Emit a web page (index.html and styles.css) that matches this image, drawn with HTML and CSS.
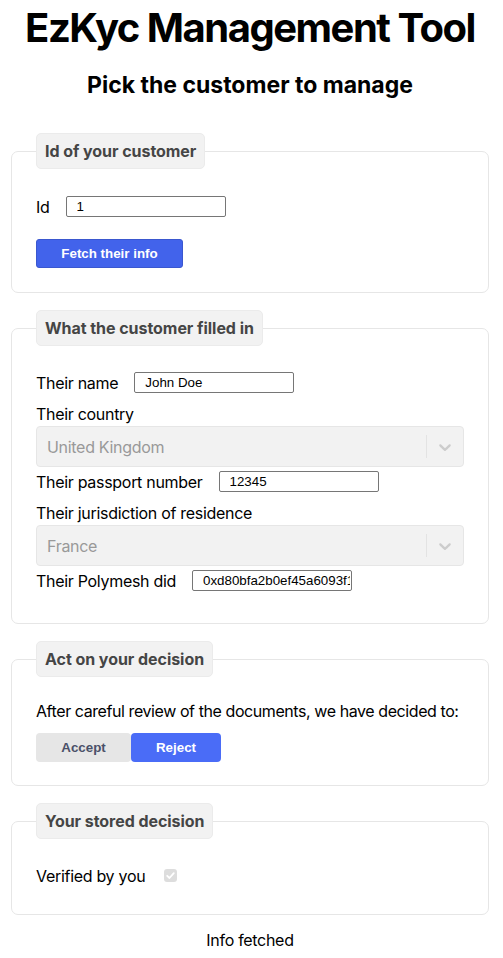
FILE: index.html
```html
<!DOCTYPE html>
<html lang="en">
<head>
<meta charset="utf-8">
<title>EzKyc Management Tool</title>
<link rel="stylesheet" href="styles.css">
</head>
<body>
<div class="app">
  <h1 class="title">EzKyc Management Tool</h1>
  <h2 class="subtitle">Pick the customer to manage</h2>

  <fieldset class="box box-id">
    <legend class="box-legend">Id of your customer</legend>
    <div class="row row-first">
      <label class="row-label" for="cid">Id</label>
      <input class="text-input" id="cid" type="text" value="1">
    </div>
    <button class="btn-primary" type="button">Fetch their info</button>
  </fieldset>

  <fieldset class="box box-filled">
    <legend class="box-legend">What the customer filled in</legend>
    <div class="row row-first">
      <label class="row-label" for="cname">Their name</label>
      <input class="text-input" id="cname" type="text" value="John Doe">
    </div>
    <div class="field-label">Their country</div>
    <div class="select is-disabled">
      <div class="select-value">United Kingdom</div>
      <div class="select-indicators">
        <span class="select-separator"></span>
        <span class="select-chevron">
          <svg viewBox="0 0 20 20" width="20" height="20" aria-hidden="true"><path d="M4.516 7.548c0.436-0.446 1.043-0.481 1.576 0l3.908 3.747 3.908-3.747c0.533-0.481 1.141-0.446 1.574 0 0.436 0.445 0.408 1.197 0 1.615-0.406 0.418-4.695 4.502-4.695 4.502-0.217 0.223-0.502 0.335-0.787 0.335s-0.57-0.112-0.789-0.335c0 0-4.287-4.084-4.695-4.502s-0.436-1.170 0-1.615z"/></svg>
        </span>
      </div>
    </div>
    <div class="row row-after-select">
      <label class="row-label" for="cpass">Their passport number</label>
      <input class="text-input" id="cpass" type="text" value="12345">
    </div>
    <div class="field-label">Their jurisdiction of residence</div>
    <div class="select is-disabled">
      <div class="select-value">France</div>
      <div class="select-indicators">
        <span class="select-separator"></span>
        <span class="select-chevron">
          <svg viewBox="0 0 20 20" width="20" height="20" aria-hidden="true"><path d="M4.516 7.548c0.436-0.446 1.043-0.481 1.576 0l3.908 3.747 3.908-3.747c0.533-0.481 1.141-0.446 1.574 0 0.436 0.445 0.408 1.197 0 1.615-0.406 0.418-4.695 4.502-4.695 4.502-0.217 0.223-0.502 0.335-0.787 0.335s-0.57-0.112-0.789-0.335c0 0-4.287-4.084-4.695-4.502s-0.436-1.170 0-1.615z"/></svg>
        </span>
      </div>
    </div>
    <div class="row row-after-select">
      <label class="row-label" for="cdid">Their Polymesh did</label>
      <input class="text-input" id="cdid" type="text" value="0xd80bfa2b0ef45a6093f1c2e7a9d3b4c5">
    </div>
  </fieldset>

  <fieldset class="box box-act">
    <legend class="box-legend">Act on your decision</legend>
    <p class="decision-text">After careful review of the documents, we have decided to:</p>
    <div class="toggle">
      <button class="toggle-btn toggle-off" type="button">Accept</button>
      <button class="toggle-btn toggle-on" type="button">Reject</button>
    </div>
  </fieldset>

  <fieldset class="box box-stored">
    <legend class="box-legend">Your stored decision</legend>
    <div class="row row-first row-check">
      <span class="row-label">Verified by you</span>
      <span class="checkbox" role="checkbox" aria-checked="true" aria-disabled="true">
        <svg viewBox="0 0 13 13" width="13" height="13" aria-hidden="true"><path d="M3.2 6.8 L5.5 9 L9.8 4.2" fill="none" stroke="#ffffff" stroke-width="1.8" stroke-linecap="round" stroke-linejoin="round"/></svg>
      </span>
    </div>
  </fieldset>

  <p class="status">Info fetched</p>
</div>
</body>
</html>
```

FILE: styles.css
```css
html, body {
  margin: 0;
  padding: 0;
  background: #ffffff;
}

body {
  font-family: "Inter", "Noto Sans", sans-serif;
  font-size: 16px;
  letter-spacing: -0.3px;
  color: #000000;
}

.app {
  padding: 0 14px 0 11px;
}

.title {
  margin: 4px 0 0;
  font-size: 40px;
  line-height: 48px;
  font-weight: 700;
  letter-spacing: -1.5px;
  white-space: nowrap;
  text-align: center;
}

.subtitle {
  margin: 19px 0 0;
  font-size: 23px;
  line-height: 28px;
  font-weight: 700;
  letter-spacing: 0;
  text-align: center;
}

.box {
  margin: 0;
  border: 1px solid #e6e6e6;
  border-radius: 7px;
  padding: 0 24px 24px;
  min-width: 0;
}

.box-id {
  margin-top: 34px;
}

.box-filled,
.box-act,
.box-stored {
  margin-top: 17px;
}

.box-filled {
  padding-bottom: 32px;
}

.box-act {
  padding-bottom: 23px;
}

.box-stored {
  padding-bottom: 28px;
}

.box-legend {
  padding: 8px 8px;
  border: 1px solid #ebebeb;
  border-radius: 5px;
  background: #f2f2f2;
  font-weight: 700;
  font-size: 16px;
  line-height: 18px;
  letter-spacing: -0.05px;
  color: #454545;
}

.row {
  display: flex;
  align-items: center;
  height: 21px;
}

.row-first {
  margin-top: 27px;
}

.box-filled .row-first {
  margin-top: 26px;
}

.row-after-select {
  margin-top: 4px;
}

.row-label {
  line-height: 18px;
}

.text-input {
  box-sizing: border-box;
  width: 160px;
  height: 21px;
  margin: 0 0 0 16px;
  padding: 0 1px 0 10px;
  border: 1px solid #767676;
  border-radius: 2px;
  font-family: "Liberation Sans", Arial, sans-serif;
  font-size: 13.33px;
  letter-spacing: 0;
  color: #000000;
  background: #ffffff;
}

.btn-primary {
  display: block;
  box-sizing: border-box;
  margin-top: 22px;
  width: 147px;
  height: 29px;
  padding: 0;
  border: 1px solid #3a57cf;
  border-radius: 3px;
  background: #4263eb;
  color: #ffffff;
  font-family: "Liberation Sans", Arial, sans-serif;
  font-weight: 700;
  font-size: 13.33px;
  letter-spacing: 0;
}

.field-label {
  margin-top: 12px;
  line-height: 18px;
}

.select {
  box-sizing: border-box;
  display: flex;
  align-items: center;
  margin-top: 3px;
  height: 41px;
  border: 1px solid #e6e6e6;
  border-radius: 4px;
  background: #f2f2f2;
}

.select-value {
  flex: 1;
  padding: 0 10px;
  color: #999999;
  font-size: 16px;
}

.select-indicators {
  display: flex;
  align-items: stretch;
  align-self: stretch;
}

.select-separator {
  width: 1px;
  margin: 8px 0;
  background: #e3e3e3;
}

.select-chevron {
  display: flex;
  align-items: center;
  padding: 0 8px;
  fill: #cccccc;
}

.select-chevron svg {
  display: block;
}

.decision-text {
  margin: 25px 0 0;
  line-height: 18px;
  letter-spacing: -0.42px;
  white-space: nowrap;
}

.toggle {
  display: flex;
  margin-top: 13px;
}

.toggle-btn {
  box-sizing: border-box;
  height: 29px;
  padding: 0;
  border: none;
  border-radius: 4px;
  font-family: "Liberation Sans", Arial, sans-serif;
  font-weight: 700;
  font-size: 13.33px;
  letter-spacing: 0;
}

.toggle-off {
  width: 95px;
  background: #e6e6e6;
  color: #4b5169;
}

.toggle-on {
  width: 90px;
  background: #4a6cf7;
  color: #ffffff;
}

.row-check {
  margin-top: 26px;
}

.checkbox {
  display: block;
  width: 13px;
  height: 13px;
  margin-left: 19px;
  border-radius: 3px;
  background: #dddddd;
}

.checkbox svg {
  display: block;
}

.status {
  margin: 16px 0 0;
  text-align: center;
  line-height: 18px;
}
```
